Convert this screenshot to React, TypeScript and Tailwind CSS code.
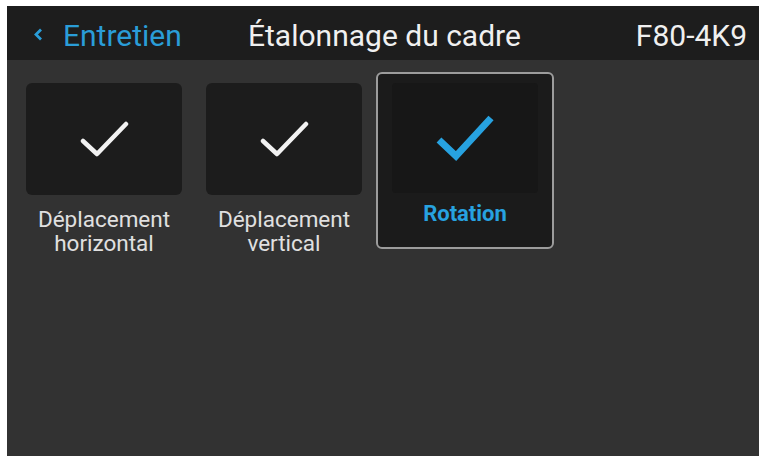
import { ReactNode } from 'react';

const font = { fontFamily: 'Roboto, "Noto Sans", sans-serif' };

function Check({ blue }: { blue?: boolean }) {
  if (blue) {
    return (
      <svg width="60" height="48" viewBox="0 0 60 48" fill="none">
        <path d="M4 26 L21 42 L56 4" stroke="#27a2e0" strokeWidth="7" strokeLinejoin="miter" />
      </svg>
    );
  }
  return (
    <svg width="50" height="40" viewBox="0 0 50 40" fill="none">
      <path d="M4 22 L18 35 L47 5" stroke="#f2f2f2" strokeWidth="4.5" strokeLinecap="round" strokeLinejoin="round" />
    </svg>
  );
}

function Tile({ label, className }: { label: ReactNode; className?: string }) {
  return (
    <div className={`flex w-[156px] flex-col items-center mt-[11px] ${className ?? ''}`}>
      <div className="flex h-[112px] w-full items-center justify-center rounded-md bg-[#1c1c1c]">
        <Check />
      </div>
      <div className="mt-[12px] text-center text-[22.5px] leading-[24px] text-[#e0e0e0]">{label}</div>
    </div>
  );
}

export default function App() {
  return (
    <div className="h-[456px] w-[759px] overflow-hidden bg-white pl-[7px] pt-[6px]" style={font}>
      <div className="flex h-full flex-col bg-[#323232]">
        {/* Header */}
        <div className="flex h-[54px] shrink-0 items-center bg-[#1d1d1d] pt-[5px] text-[30px]">
          <div className="flex w-[241px] items-center pl-[26px] text-[#2a9dd8]">
            <svg width="11" height="15" viewBox="0 0 11 15" fill="none" className="mr-[19px] mb-[2px]">
              <path d="M8 2.5 L3 7.5 L8 12.5" stroke="#2a9dd8" strokeWidth="2.8" />
            </svg>
            <span>Entretien</span>
          </div>
          <div className="flex-1 text-[#f0f0f0]">Étalonnage du cadre</div>
          <div className="pr-[12px] text-[#f0f0f0]">F80-4K9</div>
        </div>

        {/* Body */}
        <div className="flex items-start pl-[19px] pt-[12px]">
          <Tile label={<>Déplacement<br />horizontal</>} />
          <Tile className="ml-[24px] w-[154px]" label={<>Déplacement<br />vertical</>} />
          <div className="ml-[14px] flex h-[177px] w-[178px] flex-col items-center rounded-md border-2 border-[#9c9c9c] bg-[#1b1b1b] px-[14px] pt-[9px]">
            <div className="flex h-[110px] w-full items-center justify-center rounded-sm bg-[#171717]">
              <Check blue />
            </div>
            <div className="mt-[9px] text-[22px] font-bold leading-[24px] text-[#27a2e0]">Rotation</div>
          </div>
        </div>
      </div>
    </div>
  );
}
